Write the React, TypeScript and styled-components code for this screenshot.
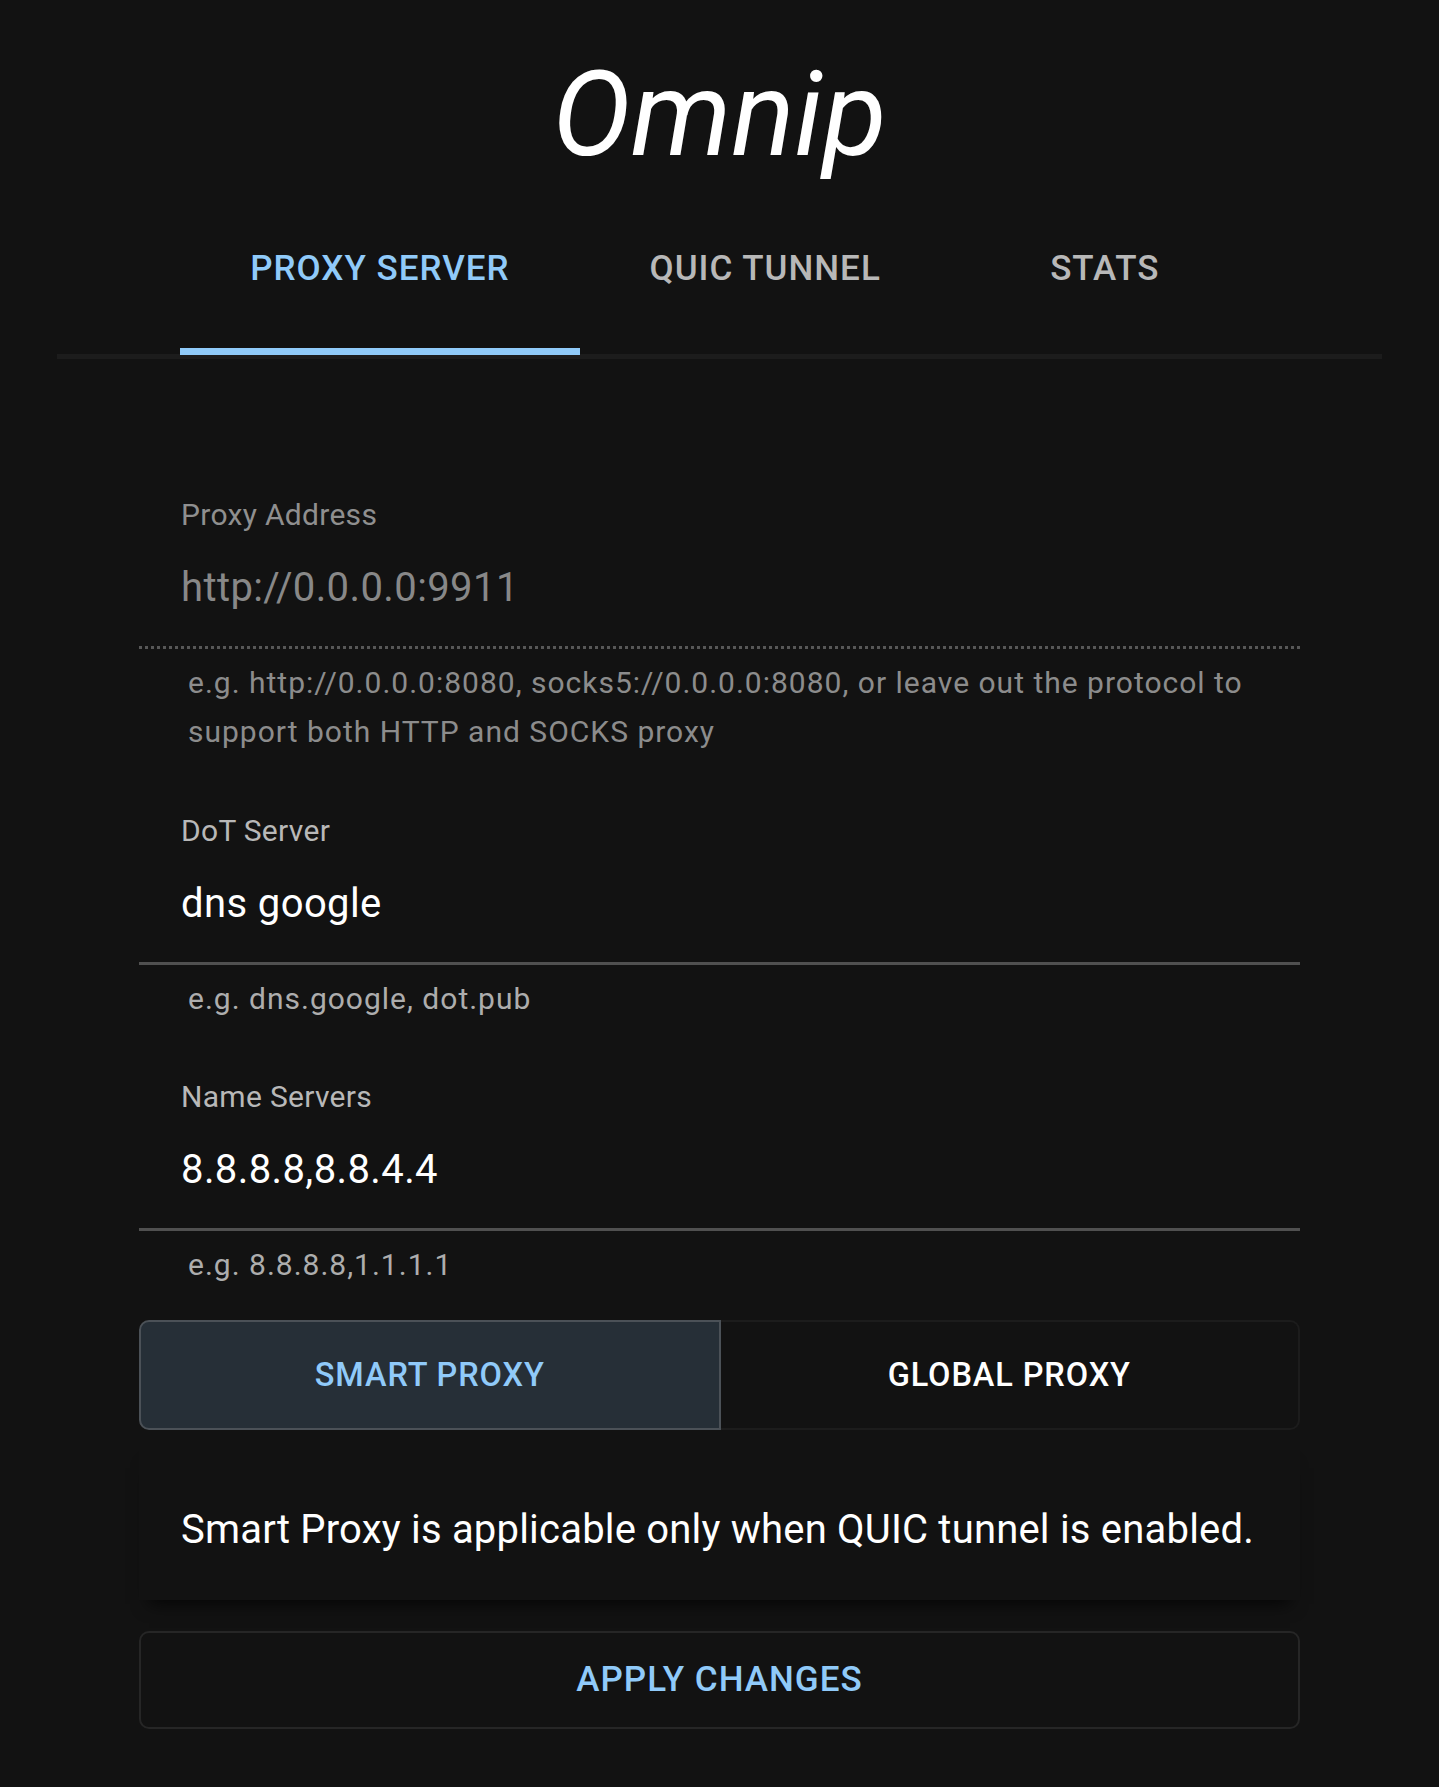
import styled, { createGlobalStyle } from 'styled-components';

const GlobalStyle = createGlobalStyle`
    * {
        box-sizing: border-box;
    }
    body {
        margin: 0;
        background: #121212;
        color: #fff;
        font-family: Roboto, 'Liberation Sans', Arial, sans-serif;
    }
`;

const Page = styled.div`
    padding: 47px 57px 59px;
`;

const Title = styled.h1`
    margin: 0;
    font-size: 118px;
    line-height: 136px;
    font-style: italic;
    font-weight: 400;
    text-align: center;
    color: #fff;
`;

const TabBar = styled.div`
    display: flex;
    justify-content: center;
    border-bottom: 5px solid #1c1c1c;
`;

const Tab = styled.button<{ $active?: boolean }>`
    position: relative;
    height: 171px;
    min-width: 308px;
    padding: 0 70px;
    border: 0;
    background: none;
    font-family: inherit;
    font-size: 35px;
    font-weight: 500;
    letter-spacing: 1px;
    text-transform: uppercase;
    color: ${p => (p.$active ? '#90caf9' : '#b8b8b8')};
    cursor: pointer;
    &::after {
        content: '';
        display: ${p => (p.$active ? 'block' : 'none')};
        position: absolute;
        left: 0;
        right: 0;
        bottom: -1px;
        height: 7px;
        background: #90caf9;
    }
`;

const Form = styled.div`
    width: 1161px;
    margin: 138px auto 0;
    display: flex;
    flex-direction: column;
`;

const Field = styled.div`
    display: flex;
    flex-direction: column;
    & + & {
        margin-top: 56px;
    }
`;

const Label = styled.label<{ $disabled?: boolean }>`
    padding-left: 42px;
    font-size: 30px;
    line-height: 36px;
    letter-spacing: 0.3px;
    color: ${p => (p.$disabled ? '#8f8f8f' : '#b8b8b8')};
`;

const Value = styled.div<{ $disabled?: boolean }>`
    margin-top: 27px;
    padding: 0 42px 29.5px;
    font-size: 40px;
    line-height: 56px;
    letter-spacing: 0.4px;
    color: ${p => (p.$disabled ? '#888' : '#fff')};
    border-bottom: 3px ${p => (p.$disabled ? 'dotted #575757' : 'solid #505050')};
`;

const Helper = styled.p<{ $disabled?: boolean }>`
    margin: 9px 0 0;
    padding: 0 35px 0 49px;
    font-size: 30px;
    line-height: 1.66;
    letter-spacing: 1px;
    color: ${p => (p.$disabled ? '#8c8c8c' : '#adadad')};
`;

const ToggleGroup = styled.div`
    display: flex;
    margin-top: 30px;
    height: 110px;
`;

const ToggleButton = styled.button<{ $selected?: boolean }>`
    flex: 1;
    font-family: inherit;
    font-size: 32.5px;
    font-weight: 500;
    letter-spacing: 0.9px;
    text-transform: uppercase;
    cursor: pointer;
    color: ${p => (p.$selected ? '#90caf9' : '#fff')};
    background: ${p => (p.$selected ? '#262f37' : '#121212')};
    border: 2.5px solid ${p => (p.$selected ? '#4b5157' : '#1c1c1c')};
    &:first-child {
        border-radius: 10px 0 0 10px;
    }
    &:last-child {
        border-left: 0;
        border-radius: 0 10px 10px 0;
    }
`;

const Notice = styled.div`
    margin-top: 14px;
    padding: 58px 42px 42px;
    font-size: 40px;
    line-height: 56px;
    letter-spacing: 0.2px;
    color: #fff;
    box-shadow: 0 14px 16px -10px rgba(0, 0, 0, 0.7);
`;

const ApplyButton = styled.button`
    margin-top: 31px;
    height: 98px;
    width: 100%;
    border: 2.5px solid #262626;
    border-radius: 10px;
    background: transparent;
    font-family: inherit;
    font-size: 35px;
    font-weight: 500;
    letter-spacing: 1px;
    text-transform: uppercase;
    color: #90caf9;
    cursor: pointer;
`;

const fields = [
    {
        label: 'Proxy Address',
        value: 'http://0.0.0.0:9911',
        helper: 'e.g. http://0.0.0.0:8080, socks5://0.0.0.0:8080, or leave out the protocol to support both HTTP and SOCKS proxy',
        disabled: true,
    },
    { label: 'DoT Server', value: 'dns google', helper: 'e.g. dns.google, dot.pub' },
    { label: 'Name Servers', value: '8.8.8.8,8.8.4.4', helper: 'e.g. 8.8.8.8,1.1.1.1' },
];

const App = () => {
    return (
        <>
            <GlobalStyle />
            <Page>
                <Title>Omnip</Title>
                <TabBar>
                    <Tab $active>Proxy Server</Tab>
                    <Tab>QUIC Tunnel</Tab>
                    <Tab>Stats</Tab>
                </TabBar>
                <Form>
                    {fields.map(f => (
                        <Field key={f.label}>
                            <Label $disabled={f.disabled}>{f.label}</Label>
                            <Value $disabled={f.disabled}>{f.value}</Value>
                            <Helper $disabled={f.disabled}>{f.helper}</Helper>
                        </Field>
                    ))}
                    <ToggleGroup>
                        <ToggleButton $selected>Smart Proxy</ToggleButton>
                        <ToggleButton>Global Proxy</ToggleButton>
                    </ToggleGroup>
                    <Notice>Smart Proxy is applicable only when QUIC tunnel is enabled.</Notice>
                    <ApplyButton>Apply Changes</ApplyButton>
                </Form>
            </Page>
        </>
    );
};

export default App;
